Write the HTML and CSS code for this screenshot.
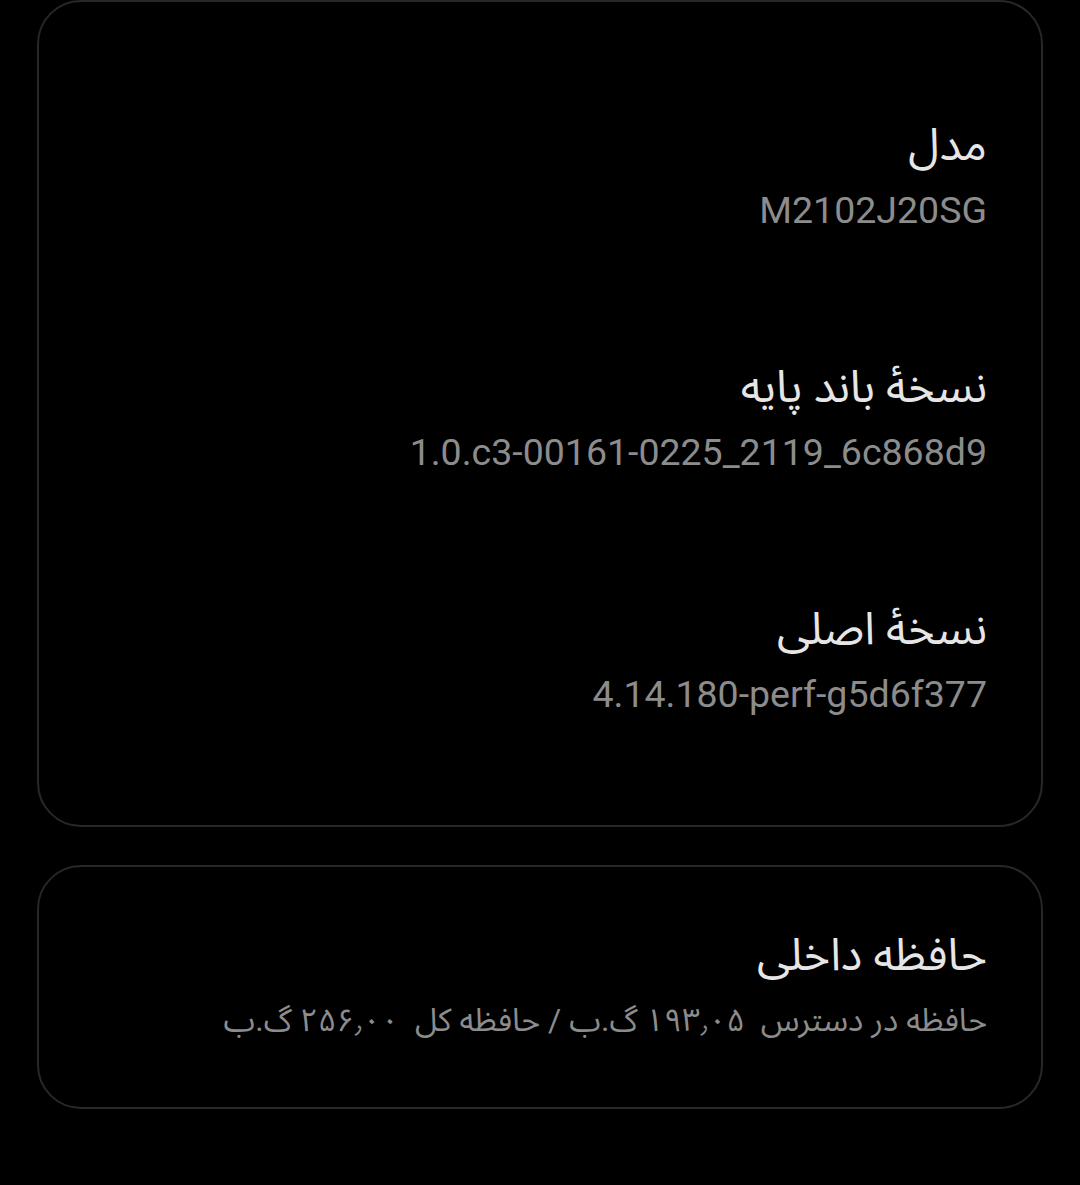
FILE: index.html
```html
<!DOCTYPE html>
<html lang="fa" dir="rtl">
<head>
  <meta charset="UTF-8">
  <meta name="viewport" content="width=device-width, initial-scale=1.0">
  <title>درباره گوشی</title>
  <link rel="stylesheet" href="styles.css">
</head>
<body>
  <div class="card card-info">
    <div class="item">
      <div class="item-title">مدل</div>
      <div class="item-value" dir="ltr">M2102J20SG</div>
    </div>
    <div class="item">
      <div class="item-title">نسخهٔ باند پایه</div>
      <div class="item-value" dir="ltr">1.0.c3-00161-0225_2119_6c868d9</div>
    </div>
    <div class="item">
      <div class="item-title">نسخهٔ اصلی</div>
      <div class="item-value" dir="ltr">4.14.180-perf-g5d6f377</div>
    </div>
  </div>

  <div class="card card-storage">
    <div class="item">
      <div class="item-title">حافظه داخلی</div>
      <div class="item-value item-value-fa">حافظه در دسترس&nbsp; ۱۹۳٫۰۵ گ.ب / حافظه کل&nbsp; ۲۵۶٫۰۰ گ.ب</div>
    </div>
  </div>
</body>
</html>
```

FILE: styles.css
```css
body {
  background: #000;
  margin: 0;
  padding: 0 37px;
  font-family: Roboto, "Noto Sans Arabic", "Noto Naskh Arabic", "DejaVu Sans", sans-serif;
}
.card {
  border: 2px solid #272727;
  border-radius: 44px;
  padding: 55px 54px 42px;
  margin-bottom: 38px;
}
.card-storage {
  padding: 62px 54px 61px;
}
.card-info .item {
  padding: 62px 0 63px;
}
.item {
  display: flex;
  flex-direction: column;
  gap: 13px;
}
.item-title {
  color: #e6e6e6;
  font-size: 45px;
  line-height: 52px;
  text-align: right;
}
.item-value {
  color: #8c8c8c;
  font-size: 37.5px;
  line-height: 52px;
  text-align: right;
}
.item-value-fa {
  font-size: 32px;
}
```
